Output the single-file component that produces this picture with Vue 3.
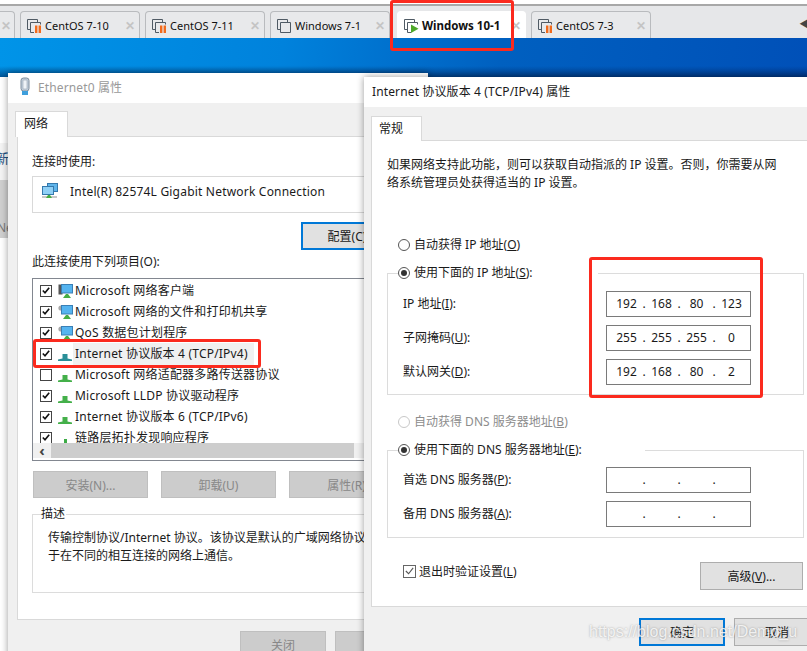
<script setup>
const tabs = [
  { name: 'CentOS 7-10', state: 'paused' },
  { name: 'CentOS 7-11', state: 'paused' },
  { name: 'Windows 7-1', state: 'off' },
  { name: 'Windows 10-1', state: 'play', active: true },
  { name: 'CentOS 7-3', state: 'paused' }
]
const rows = [
  { text: 'Microsoft 网络客户端', on: true, icon: 'client' },
  { text: 'Microsoft 网络的文件和打印机共享', on: true, icon: 'share' },
  { text: 'QoS 数据包计划程序', on: true, icon: 'share' },
  { text: 'Internet 协议版本 4 (TCP/IPv4)', on: true, icon: 'teal', selected: true },
  { text: 'Microsoft 网络适配器多路传送器协议', on: false, icon: 'green' },
  { text: 'Microsoft LLDP 协议驱动程序', on: true, icon: 'green' },
  { text: 'Internet 协议版本 6 (TCP/IPv6)', on: true, icon: 'green' },
  { text: '链路层拓扑发现响应程序', on: true, icon: 'dot' }
]
const ipRows = [
  { label: 'IP 地址(', key: 'I', end: '):', parts: ['192', '168', '80', '123'] },
  { label: '子网掩码(', key: 'U', end: '):', parts: ['255', '255', '255', '0'] },
  { label: '默认网关(', key: 'D', end: '):', parts: ['192', '168', '80', '2'] }
]
const dnsRows = [
  { label: '首选 DNS 服务器(', key: 'P', end: '):', parts: ['', '', '', ''] },
  { label: '备用 DNS 服务器(', key: 'A', end: '):', parts: ['', '', '', ''] }
]
</script>

<template>
  <div class="desktop">
    <div class="edge-strip"></div>
    <div class="topline"></div>
    <div class="tabbar">
      <div class="tab stub"><span class="close">✕</span></div>
      <div v-for="t in tabs" :key="t.name" class="tab" :class="{ active: t.active }">
        <svg class="tab-icon" width="16" height="15" viewBox="0 0 16 15">
          <path d="M5 11.5H1.5V1.5H11.5V4.5" fill="none" stroke="#4f5a64" stroke-width="1" />
          <path v-if="t.state === 'off'" d="M4.5 4.5H14.5V14.5H4.5Z" fill="none" stroke="#4f5a64" stroke-width="1" />
          <path v-else d="M8 14.5H4.5V4.5H14.5V6.5" fill="none" stroke="#4f5a64" stroke-width="1" />
          <g v-if="t.state === 'paused'" fill="#f26a1b">
            <rect x="9" y="7.5" width="2.4" height="7.5" />
            <rect x="12.6" y="7.5" width="2.4" height="7.5" />
          </g>
          <path v-if="t.state === 'play'" d="M8 6.5L15.5 10.7L8 15Z" fill="#4ea82a" />
        </svg>
        <span class="tab-name">{{ t.name }}</span>
        <span class="close">✕</span>
      </div>
      <span class="scroll-arrow">◀</span>
    </div>
    <div class="wallpaper"></div>

    <div class="side-back">
      <div class="side-a"><span>新</span></div>
      <div class="side-b"><span>Ne</span></div>
    </div>

    <section class="win win-left">
      <header class="title">
        <svg width="14" height="20" viewBox="0 0 14 20" class="eth">
          <rect x="3" y="1" width="8" height="13" rx="2.5" fill="#c5d2de" stroke="#7d8c9b" />
          <rect x="5" y="3" width="4" height="9" fill="#eef3f7" stroke="#97a6b3" stroke-width=".6" />
          <rect x="4" y="14" width="6" height="4" fill="#3f9fdc" />
        </svg>
        <span class="title-text faded">Ethernet0 属性</span>
      </header>
      <div class="tab-head left-head">网络</div>
      <div class="page left-page">
        <div class="lbl first">连接时使用:</div>
        <div class="adapter">
          <svg width="16" height="16" viewBox="0 0 16 16">
            <rect x="5.5" y="0.5" width="10" height="8" fill="#5fb4ea" stroke="#3579ad" />
            <rect x="0.5" y="3.5" width="11" height="8" fill="#8fd0f6" stroke="#3579ad" />
            <rect x="0" y="13" width="15" height="2" fill="#c8c8c8" />
            <path d="M4 15L6 12H8L10 15Z" fill="#46ad44" />
          </svg>
          <span>Intel(R) 82574L Gigabit Network Connection</span>
        </div>
        <button class="btn focus cfg">配置(C)</button>
        <div class="lbl second">此连接使用下列项目(O):</div>
        <div class="listbox">
          <div class="rows">
            <div v-for="r in rows" :key="r.text" class="row">
              <span class="check">
                <svg v-if="r.on" width="11" height="11" viewBox="0 0 11 11">
                  <path d="M2 5.5L4.4 8L9 2.5" fill="none" stroke="#111" stroke-width="1.8" />
                </svg>
              </span>
              <svg class="row-icon" width="16" height="16" viewBox="0 0 16 16">
                <template v-if="r.icon === 'client' || r.icon === 'share'">
                  <rect v-if="r.icon === 'client'" x="0.5" y="1.5" width="4" height="10" fill="#555" />
                  <circle v-else cx="3" cy="4" r="2.6" fill="#a8a8a8" />
                  <rect x="3.5" y="1.5" width="11" height="8.5" fill="#55b4f0" stroke="#3a7fb5" />
                  <path d="M5 15L8 11H10L13 15Z" fill="#46ad44" />
                </template>
                <template v-else-if="r.icon === 'dot'">
                  <rect x="6" y="9" width="3" height="4" fill="#3cab45" />
                </template>
                <template v-else>
                  <path d="M0 15V13.5L4.5 12.5V8H9.5V12.5L14 13.5V15Z" :fill="r.icon === 'teal' ? '#2a8f98' : '#44b04a'" />
                </template>
              </svg>
              <span class="row-text" :class="{ selected: r.selected }">{{ r.text }}</span>
            </div>
          </div>
          <div class="hscroll">
            <span class="arrow">‹</span>
            <span class="thumb"></span>
          </div>
        </div>
        <div class="actions">
          <button class="btn off">安装(N)...</button>
          <button class="btn off">卸载(U)</button>
          <button class="btn off">属性(R)</button>
        </div>
        <div class="group desc">
          <span class="legend desc-legend">描述</span>
          <p class="desc-text">传输控制协议/Internet 协议。该协议是默认的广域网络协议，用<br />于在不同的相互连接的网络上通信。</p>
        </div>
      </div>
      <div class="foot left-foot">
        <button class="btn off dlg">关闭</button>
        <button class="btn off dlg">取消</button>
      </div>
    </section>

    <section class="win win-right">
      <header class="title">
        <span class="title-text">Internet 协议版本 4 (TCP/IPv4) 属性</span>
      </header>
      <div class="tab-head right-head">常规</div>
      <div class="page right-page">
        <p class="intro">如果网络支持此功能，则可以获取自动指派的 IP 设置。否则，你需要从网<br />络系统管理员处获得适当的 IP 设置。</p>
        <label class="radio r-auto"><i class="dot"></i><span>自动获得 IP 地址(<u>O</u>)</span></label>
        <div class="group ip-group">
          <label class="radio legend radio-legend ip-legend"><i class="dot on"></i><span>使用下面的 IP 地址(<u>S</u>):</span></label>
          <div v-for="r in ipRows" :key="r.key" class="field">
            <span class="field-label">{{ r.label }}<u>{{ r.key }}</u>{{ r.end }}</span>
            <div class="ip">
              <template v-for="(p, i) in r.parts" :key="i">
                <span class="octet">{{ p }}</span>
                <span v-if="i < 3" class="ipdot">.</span>
              </template>
            </div>
          </div>
        </div>
        <label class="radio r-dns muted"><i class="dot dim"></i><span>自动获得 DNS 服务器地址(<u>B</u>)</span></label>
        <div class="group dns-group">
          <label class="radio legend radio-legend dns-legend"><i class="dot on"></i><span>使用下面的 DNS 服务器地址(<u>E</u>):</span></label>
          <div v-for="r in dnsRows" :key="r.key" class="field">
            <span class="field-label">{{ r.label }}<u>{{ r.key }}</u>{{ r.end }}</span>
            <div class="ip">
              <template v-for="(p, i) in r.parts" :key="i">
                <span class="octet">{{ p }}</span>
                <span v-if="i < 3" class="ipdot">.</span>
              </template>
            </div>
          </div>
        </div>
        <div class="bottom-row">
          <label class="verify">
            <span class="check soft">
              <svg width="12" height="12" viewBox="0 0 12 12">
                <path d="M2 6L5 9L10 2.5" fill="none" stroke="#555" stroke-width="1.2" />
              </svg>
            </span>
            <span>退出时验证设置(<u>L</u>)</span>
          </label>
          <button class="btn adv">高级(<u>V</u>)...</button>
        </div>
      </div>
      <div class="foot right-foot">
        <button class="btn focus dlg">确定</button>
        <button class="btn plain dlg">取消</button>
      </div>
    </section>

    <div class="mark mark-tab"></div>
    <div class="mark mark-row"></div>
    <div class="mark mark-ip"></div>
    <div class="watermark">https://blog.csdn.net/Demo_u</div>
  </div>
</template>

<style scoped>
.desktop {
  position: relative;
  width: 807px;
  height: 651px;
  overflow: hidden;
  background: #fff;
  font-family: "Noto Sans", "Noto Sans CJK SC", sans-serif;
  font-size: 12px;
  color: #1a1a1a;
}
.edge-strip { height: 4px; background: #fff; }
.topline { height: 2px; background: #a8a8a8; }
.tabbar {
  display: flex;
  align-items: flex-end;
  height: 32px;
  gap: 5px;
  background: #e6e7e9;
  position: relative;
}
.tab {
  display: flex;
  align-items: center;
  width: 120px;
  height: 27px;
  box-sizing: border-box;
  padding: 0 4px 0 5px;
  border: 1px solid #b9bbbe;
  border-bottom: none;
  border-radius: 4px 4px 0 0;
  background: #e8e9eb;
}
.tab.stub { width: 15px; padding: 0; border-left: none; border-radius: 0 4px 0 0; justify-content: flex-end; }
.tab.active { width: 129px; margin-left: 2px; background: #fff; border-color: #fff; font-weight: 700; }
.tab-icon { flex: none; }
.tab-name { margin-left: 3px; font-size: 11px; color: #111; white-space: nowrap; flex: 1; }
.tab.active .tab-name { font-size: 11.5px; }
.close { color: #c4c4c4; font-size: 12px; font-weight: 700; }
.tab.stub .close { margin-right: 3px; }
.scroll-arrow { position: absolute; right: -3px; top: 9px; font-size: 11px; color: #444; }
.wallpaper {
  height: 39px;
  background:
    linear-gradient(to bottom, rgba(0, 0, 0, 0) 72%, rgba(0, 30, 80, .55)),
    linear-gradient(95deg, #0094e8 0%, #0082dc 35%, #0060c0 62%, #0050b8 100%);
}
.side-back {
  position: absolute;
  left: 0;
  top: 77px;
  width: 9px;
  height: 574px;
  background: #fff;
  overflow: hidden;
}
.side-a {
  margin-top: 66px;
  height: 37px;
  background: #f4f4f4;
  color: #1b4f80;
  font-size: 13px;
  line-height: 30px;
  white-space: nowrap;
}
.side-a span { margin-left: -4px; }
.side-b {
  height: 58px;
  background: #cfcfcf;
  color: #777;
  font-size: 12px;
  line-height: 96px;
  white-space: nowrap;
}
.side-b span { margin-left: -3px; }
.win {
  position: absolute;
  box-sizing: border-box;
  background: #f0f0f0;
  box-shadow: 0 0 7px rgba(0, 0, 0, .4);
}
.win-left { left: 8px; top: 73px; width: 420px; height: 600px; }
.win-right { left: 364px; top: 77px; width: 470px; height: 600px; }
.title {
  box-sizing: border-box;
  display: flex;
  align-items: center;
  height: 30px;
  padding-bottom: 2px;
  background: #fff;
}
.eth { margin-left: 10px; margin-right: 6px; }
.title-text { font-size: 12px; white-space: nowrap; letter-spacing: .13px; }
.win-right .title-text { margin-left: 8px; }
.faded { color: #999; }
.tab-head {
  box-sizing: border-box;
  height: 26px;
  margin-top: 8px;
  background: #fff;
  border: 1px solid #d9d9d9;
  border-bottom: none;
  position: relative;
  z-index: 1;
  line-height: 24px;
}
.left-head { width: 53px; margin-left: 7px; padding-left: 8px; }
.right-head { width: 51px; margin-left: 7px; margin-top: 9px; height: 25px; padding-left: 7px; }
.page {
  box-sizing: border-box;
  background: #fff;
  border: 1px solid #d9d9d9;
  margin-top: -1px;
}
.left-page { margin-left: 9px; height: 484px; padding: 0 0 0 14px; width: 430px; }
.lbl { height: 16px; line-height: 16px; }
.lbl.first { margin-top: 17px; }
.lbl.second { margin-top: 4px; }
.adapter {
  box-sizing: border-box;
  display: flex;
  align-items: flex-start;
  height: 37px;
  width: 380px;
  margin-top: 6px;
  padding: 6px 0 0 9px;
  border: 1px solid #d9d9d9;
  gap: 12px;
  font-size: 12px;
  letter-spacing: .2px;
  white-space: nowrap;
}
.btn {
  display: block;
  box-sizing: border-box;
  font: inherit;
  color: #1a1a1a;
  background: #e1e1e1;
  border: 1px solid #adadad;
  padding: 0;
  text-align: center;
}
.btn.focus { border: 2px solid #0078d7; }
.cfg { width: 86px; height: 28px; margin: 9px 0 0 269px; padding-left: 6px; white-space: nowrap; }
.listbox {
  box-sizing: border-box;
  width: 380px;
  height: 183px;
  margin-top: 8px;
  border: 1px solid #828790;
}
.rows { box-sizing: border-box; height: 164px; padding-top: 1px; overflow: hidden; }
.row { display: flex; align-items: center; height: 21px; }
.check {
  box-sizing: border-box;
  display: flex;
  align-items: center;
  justify-content: center;
  width: 12px;
  height: 12px;
  border: 1px solid #444;
  flex: none;
}
.row .check { margin-left: 7px; }
.row-icon { margin-left: 6px; flex: none; }
.row-text { margin-left: -1px; padding: 2px 0 2px 2px; white-space: nowrap; line-height: 18px; letter-spacing: .2px; }
.row-text.selected { background: #f0f0f0; padding-right: 6px; }
.hscroll {
  position: relative;
  display: flex;
  align-items: center;
  height: 15px;
  background: #f0f0f0;
  width: 331px;
}
.arrow { width: 18px; text-align: center; font-weight: 700; font-size: 15px; line-height: 13px; color: #444; }
.thumb { width: 303px; height: 15px; background: #cdcdcd; }
.actions { display: flex; gap: 13px; margin: 10px 0 0 1px; }
.btn.off { background: #ccc; border-color: #bfbfbf; color: #888; }
.actions .btn { width: 115px; height: 27px; flex: none; }
.group {
  position: relative;
  box-sizing: border-box;
  border: 1px solid #dcdcdc;
  background: #fff;
}
.desc { width: 380px; height: 79px; margin-top: 16px; }
.legend { position: absolute; background: #fff; line-height: 16px; }
.desc-legend { left: 8px; top: -9px; padding: 0 1px 0 0; }
.desc-text { margin: 14px 0 0 15px; line-height: 18px; white-space: nowrap; }
.foot { display: flex; gap: 9px; }
.left-foot { margin: 11px 0 0 232px; }
.right-foot { margin: 11px 0 0 275px; }
.dlg { width: 86px; height: 28px; flex: none; }
.btn.plain { background: #e1e1e1; border-color: #adadad; }
.right-page { margin-left: 7px; height: 467px; width: 460px; padding: 0 0 0 15px; }
.intro { margin: 15px 0 0; line-height: 18px; white-space: nowrap; }
.radio { display: flex; align-items: center; gap: 4px; height: 16px; line-height: 16px; white-space: nowrap; }
.r-auto { margin: 45px 0 0 11px; }
.r-dns { margin: 19px 0 0 11px; }
.muted { color: #8c8c8c; }
.dot {
  box-sizing: border-box;
  display: block;
  width: 12px;
  height: 12px;
  border: 1px solid #555;
  border-radius: 50%;
  flex: none;
  position: relative;
  background: #fff;
}
.dot.dim { border-color: #c8c8c8; }
.dot.on::after {
  content: "";
  position: absolute;
  left: 2px;
  top: 2px;
  width: 6px;
  height: 6px;
  border-radius: 50%;
  background: #333;
}
.ip-group { width: 417px; height: 122px; margin-top: 20px; padding: 17px 0 0 15px; }
.dns-group { width: 417px; height: 88px; margin-top: 20px; padding: 16px 0 0 15px; }
.radio-legend { left: 10px; top: -9px; }
.ip-legend { width: 200px; }
.dns-legend { width: 247px; }
.field { display: flex; align-items: center; height: 26px; margin-bottom: 8px; }
.field-label { width: 203px; flex: none; white-space: nowrap; margin-top: -2px; }
.ip {
  box-sizing: border-box;
  display: flex;
  align-items: center;
  width: 145px;
  height: 26px;
  padding: 0 0 2px 4px;
  border: 1px solid #7a7a7a;
  background: #fff;
  font-size: 12px;
}
.octet { width: 31px; text-align: center; flex: none; }
.ipdot { width: 4px; text-align: center; flex: none; }
.bottom-row { display: flex; justify-content: space-between; width: 416px; margin-top: 24px; }
.verify { display: flex; align-items: center; gap: 3px; height: 16px; margin: 1px 0 0 16px; }
.check.soft { border-color: #666; width: 13px; height: 13px; }
.adv { width: 103px; height: 28px; }
.mark {
  position: absolute;
  box-sizing: border-box;
  border: 3px solid #fb2a1e;
  border-radius: 3px;
}
.mark-tab { left: 390px; top: 0; width: 124px; height: 51px; }
.mark-row { left: 33px; top: 339px; width: 228px; height: 29px; }
.mark-ip { left: 589px; top: 257px; width: 174px; height: 141px; }
.watermark {
  position: absolute;
  left: 589px;
  top: 621px;
  font-family: "Liberation Sans", sans-serif;
  font-size: 16px;
  line-height: 22px;
  white-space: nowrap;
  color: rgba(255, 255, 255, .82);
  text-shadow: 0 0 2px rgba(90, 90, 90, .55);
}
</style>
